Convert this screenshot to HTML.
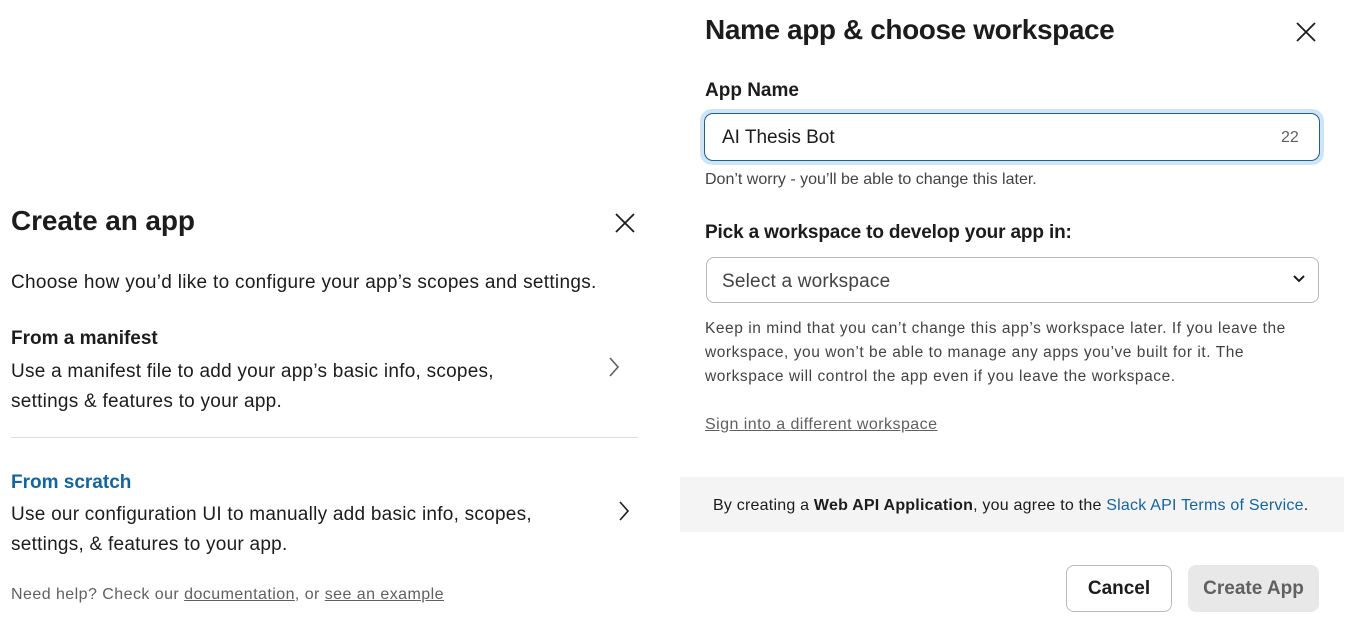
<!DOCTYPE html>
<html><head><meta charset="utf-8"><style>
*{margin:0;padding:0;box-sizing:border-box}
body{width:1352px;height:638px;background:#fff;font-family:"Liberation Sans",sans-serif;color:#1d1c1d;position:relative;overflow:hidden}
.a{position:absolute;white-space:nowrap}
u{text-decoration:underline}
</style></head><body>
<div class="a" style="left:11px;top:205px;font-size:28px;font-weight:bold;letter-spacing:-0.1px">Create an app</div>
<svg class="a" style="left:614px;top:212px" width="22" height="22"><path d="M2 2L20 20M20 2L2 20" stroke="#1d1c1d" stroke-width="1.8"/></svg>
<div class="a" style="left:11px;top:272px;font-size:19px;letter-spacing:0.3px">Choose how you’d like to configure your app’s scopes and settings.</div>
<div class="a" style="left:11px;top:328px;font-size:19px;font-weight:bold;letter-spacing:0px">From a manifest</div>
<div class="a" style="left:11px;top:357px;font-size:19px;line-height:30px;letter-spacing:0.25px">Use a manifest file to add your app’s basic info, scopes,<br>settings &amp; features to your app.</div>
<svg class="a" style="left:606px;top:356px" width="16" height="22"><path d="M4 2L12 11L4 20" fill="none" stroke="#616061" stroke-width="1.6"/></svg>
<div class="a" style="left:11px;top:437px;width:627px;height:1px;background:#ddd"></div>
<div class="a" style="left:11px;top:472px;font-size:19px;font-weight:bold;color:#1264a3;letter-spacing:0px">From scratch</div>
<div class="a" style="left:11px;top:500px;font-size:19px;line-height:30px;letter-spacing:0.25px">Use our configuration UI to manually add basic info, scopes,<br>settings, &amp; features to your app.</div>
<svg class="a" style="left:616px;top:500px" width="16" height="22"><path d="M4 2L12 11L4 20" fill="none" stroke="#1d1c1d" stroke-width="1.6"/></svg>
<div class="a" style="left:11px;top:586px;font-size:16px;color:#616061;letter-spacing:0.45px">Need help? Check our <u>documentation</u>, or <u>see an example</u></div>

<div class="a" style="left:705px;top:14px;font-size:28px;font-weight:bold;letter-spacing:-0.4px">Name app &amp; choose workspace</div>
<svg class="a" style="left:1295px;top:21px" width="22" height="22"><path d="M2 2L20 20M20 2L2 20" stroke="#1d1c1d" stroke-width="1.8"/></svg>
<div class="a" style="left:705px;top:80px;font-size:19px;font-weight:bold;letter-spacing:0px">App Name</div>
<div class="a" style="left:700px;top:109px;width:624px;height:56px;border-radius:12px;background:#cfe5f6"></div>
<div class="a" style="left:704px;top:113px;width:616px;height:48px;border-radius:9px;border:1.5px solid #1d5f92;background:#fff"></div>
<div class="a" style="left:722px;top:127px;font-size:19px;letter-spacing:0px">AI Thesis Bot</div>
<div class="a" style="left:1281px;top:129px;font-size:16px;color:#616061">22</div>
<div class="a" style="left:705px;top:171px;font-size:16px;color:#454245">Don’t worry - you’ll be able to change this later.</div>
<div class="a" style="left:705px;top:222px;font-size:19px;font-weight:bold;letter-spacing:-0.15px">Pick a workspace to develop your app in:</div>
<div class="a" style="left:706px;top:257px;width:613px;height:46px;border-radius:8px;border:1px solid #b8b8b8"></div>
<div class="a" style="left:722px;top:271px;font-size:19px;color:#454245;letter-spacing:0.2px">Select a workspace</div>
<svg class="a" style="left:1292px;top:274px" width="14" height="10"><path d="M2 2L7 7L12 2" fill="none" stroke="#1d1c1d" stroke-width="2"/></svg>
<div class="a" style="left:705px;top:317px;font-size:15.5px;line-height:24px;color:#454245;letter-spacing:0.55px">Keep in mind that you can’t change this app’s workspace later. If you leave the<br>workspace, you won’t be able to manage any apps you’ve built for it. The<br>workspace will control the app even if you leave the workspace.</div>
<div class="a" style="left:705px;top:416px;font-size:16px;color:#616061;letter-spacing:0.45px"><u>Sign into a different workspace</u></div>
<div class="a" style="left:680px;top:477px;width:664px;height:55px;background:#f4f4f4"></div>
<div class="a" style="left:713px;top:497px;font-size:16px;color:#1d1c1d;letter-spacing:0.22px">By creating a <b>Web API Application</b>, you agree to the <span style="color:#1264a3">Slack API Terms of Service</span>.</div>
<div class="a" style="left:1066px;top:565px;width:106px;height:47px;border:1px solid #bbb;border-radius:8px;font-size:19px;font-weight:bold;line-height:45px;text-align:center">Cancel</div>
<div class="a" style="left:1188px;top:565px;width:131px;height:47px;background:#e8e8e8;border-radius:8px;font-size:19px;font-weight:bold;line-height:47px;text-align:center;color:#616061">Create App</div>
</body></html>
